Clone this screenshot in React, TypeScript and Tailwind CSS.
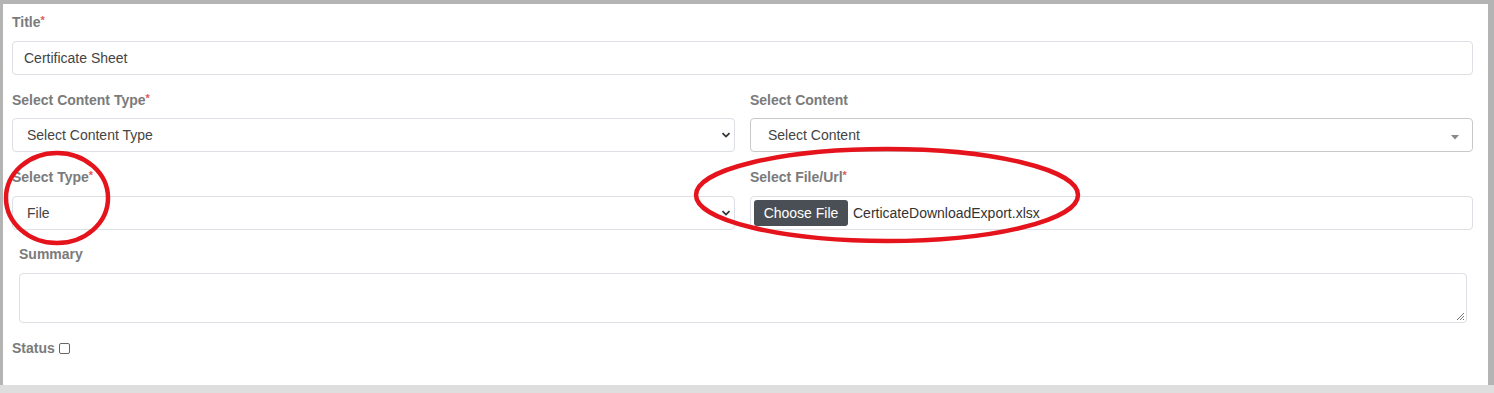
import React from "react";

const Chevron = () => (
  <svg width="10" height="6" viewBox="0 0 10 6" className="absolute right-[3px] top-1/2 -translate-y-1/2">
    <path d="M1.5 1.2 L5 4.6 L8.5 1.2" fill="none" stroke="#333" strokeWidth="1.8" />
  </svg>
);

const Label = ({ text, req, className = "" }: { text: string; req?: boolean; className?: string }) => (
  <div className={`h-[20px] leading-[20px] text-[14px] font-bold text-[#7b7b7b] ${className}`}>
    {text}
    {req && <span className="text-[#e05a5a] text-[11px] align-top relative top-[-2px]">*</span>}
  </div>
);

export default function App() {
  return (
    <div
      className="relative w-[1494px] h-[393px] bg-[#b4b4b4] overflow-hidden"
      style={{ fontFamily: '"Liberation Sans", Arial, sans-serif' }}
    >
      <div className="absolute left-0 right-0 bottom-0 h-[8px] bg-[#dedede]" />
      <div className="absolute left-[3px] top-[4px] w-[1485px] h-[381px] bg-white pl-[9px] pr-[15px] pt-[8px]">
        <Label text="Title" req />
        <div className="mt-[9px] h-[34px] border border-[#dcdfe3] rounded-[4px] flex items-center pl-[11px] text-[14px] text-[#444]">
          Certificate Sheet
        </div>

        <div className="mt-[15px] grid grid-cols-2 gap-x-[15px]">
          <div>
            <Label text="Select Content Type" req />
            <div className="relative mt-[8px] h-[34px] border border-[#dcdfe3] rounded-[4px] flex items-center pl-[14px] text-[14px] text-[#444]">
              Select Content Type
              <Chevron />
            </div>
          </div>
          <div>
            <Label text="Select Content" />
            <div className="relative mt-[8px] h-[34px] border border-[#c9c9c9] rounded-[4px] flex items-center pl-[17px] text-[14px] text-[#444]">
              Select Content
              <svg width="8" height="5" viewBox="0 0 8 5" className="absolute right-[13px] top-[16px]">
                <path d="M0 0 L8 0 L4 4.5 Z" fill="#888" />
              </svg>
            </div>
          </div>
        </div>

        <div className="mt-[15px] grid grid-cols-2 gap-x-[15px]">
          <div>
            <Label text="Select Type" req />
            <div className="relative mt-[9px] h-[34px] border border-[#dcdfe3] rounded-[4px] flex items-center pl-[14px] text-[14px] text-[#444]">
              File
              <Chevron />
            </div>
          </div>
          <div>
            <Label text="Select File/Url" req />
            <div className="mt-[9px] h-[34px] border border-[#dcdfe3] rounded-[4px] flex items-center pl-[3px] text-[14px] text-[#444]">
              <span className="h-[26px] w-[94px] rounded-[3px] bg-[#4a4f55] text-white flex items-center justify-center">
                Choose File
              </span>
              <span className="ml-[5px] text-[#333]">CerticateDownloadExport.xlsx</span>
            </div>
          </div>
        </div>

        <div className="pl-[7px] pr-[6px]">
          <Label text="Summary" className="mt-[14px]" />
          <div className="relative mt-[9px] h-[50px] border border-[#dcdfe3] rounded-[4px]">
            <svg width="10" height="10" viewBox="0 0 10 10" className="absolute right-[1px] bottom-[1px]">
              <path d="M9 2 L2 9 M9 5 L5 9 M9 8 L8 9" stroke="#777" strokeWidth="1" />
            </svg>
          </div>
        </div>

        <div className="mt-[15px] flex items-center h-[20px]">
          <span className="text-[14px] font-bold text-[#7b7b7b]">Status</span>
          <span className="ml-[4px] w-[11px] h-[11px] border border-[#666] rounded-[2px] bg-white" />
        </div>
      </div>

      <svg className="absolute left-0 top-0 pointer-events-none" width="1494" height="393">
        <ellipse cx="57" cy="198" rx="51" ry="45" fill="none" stroke="#e5141c" strokeWidth="4.5" />
        <ellipse cx="887" cy="195" rx="191" ry="46" fill="none" stroke="#e5141c" strokeWidth="4.5" />
      </svg>
    </div>
  );
}
